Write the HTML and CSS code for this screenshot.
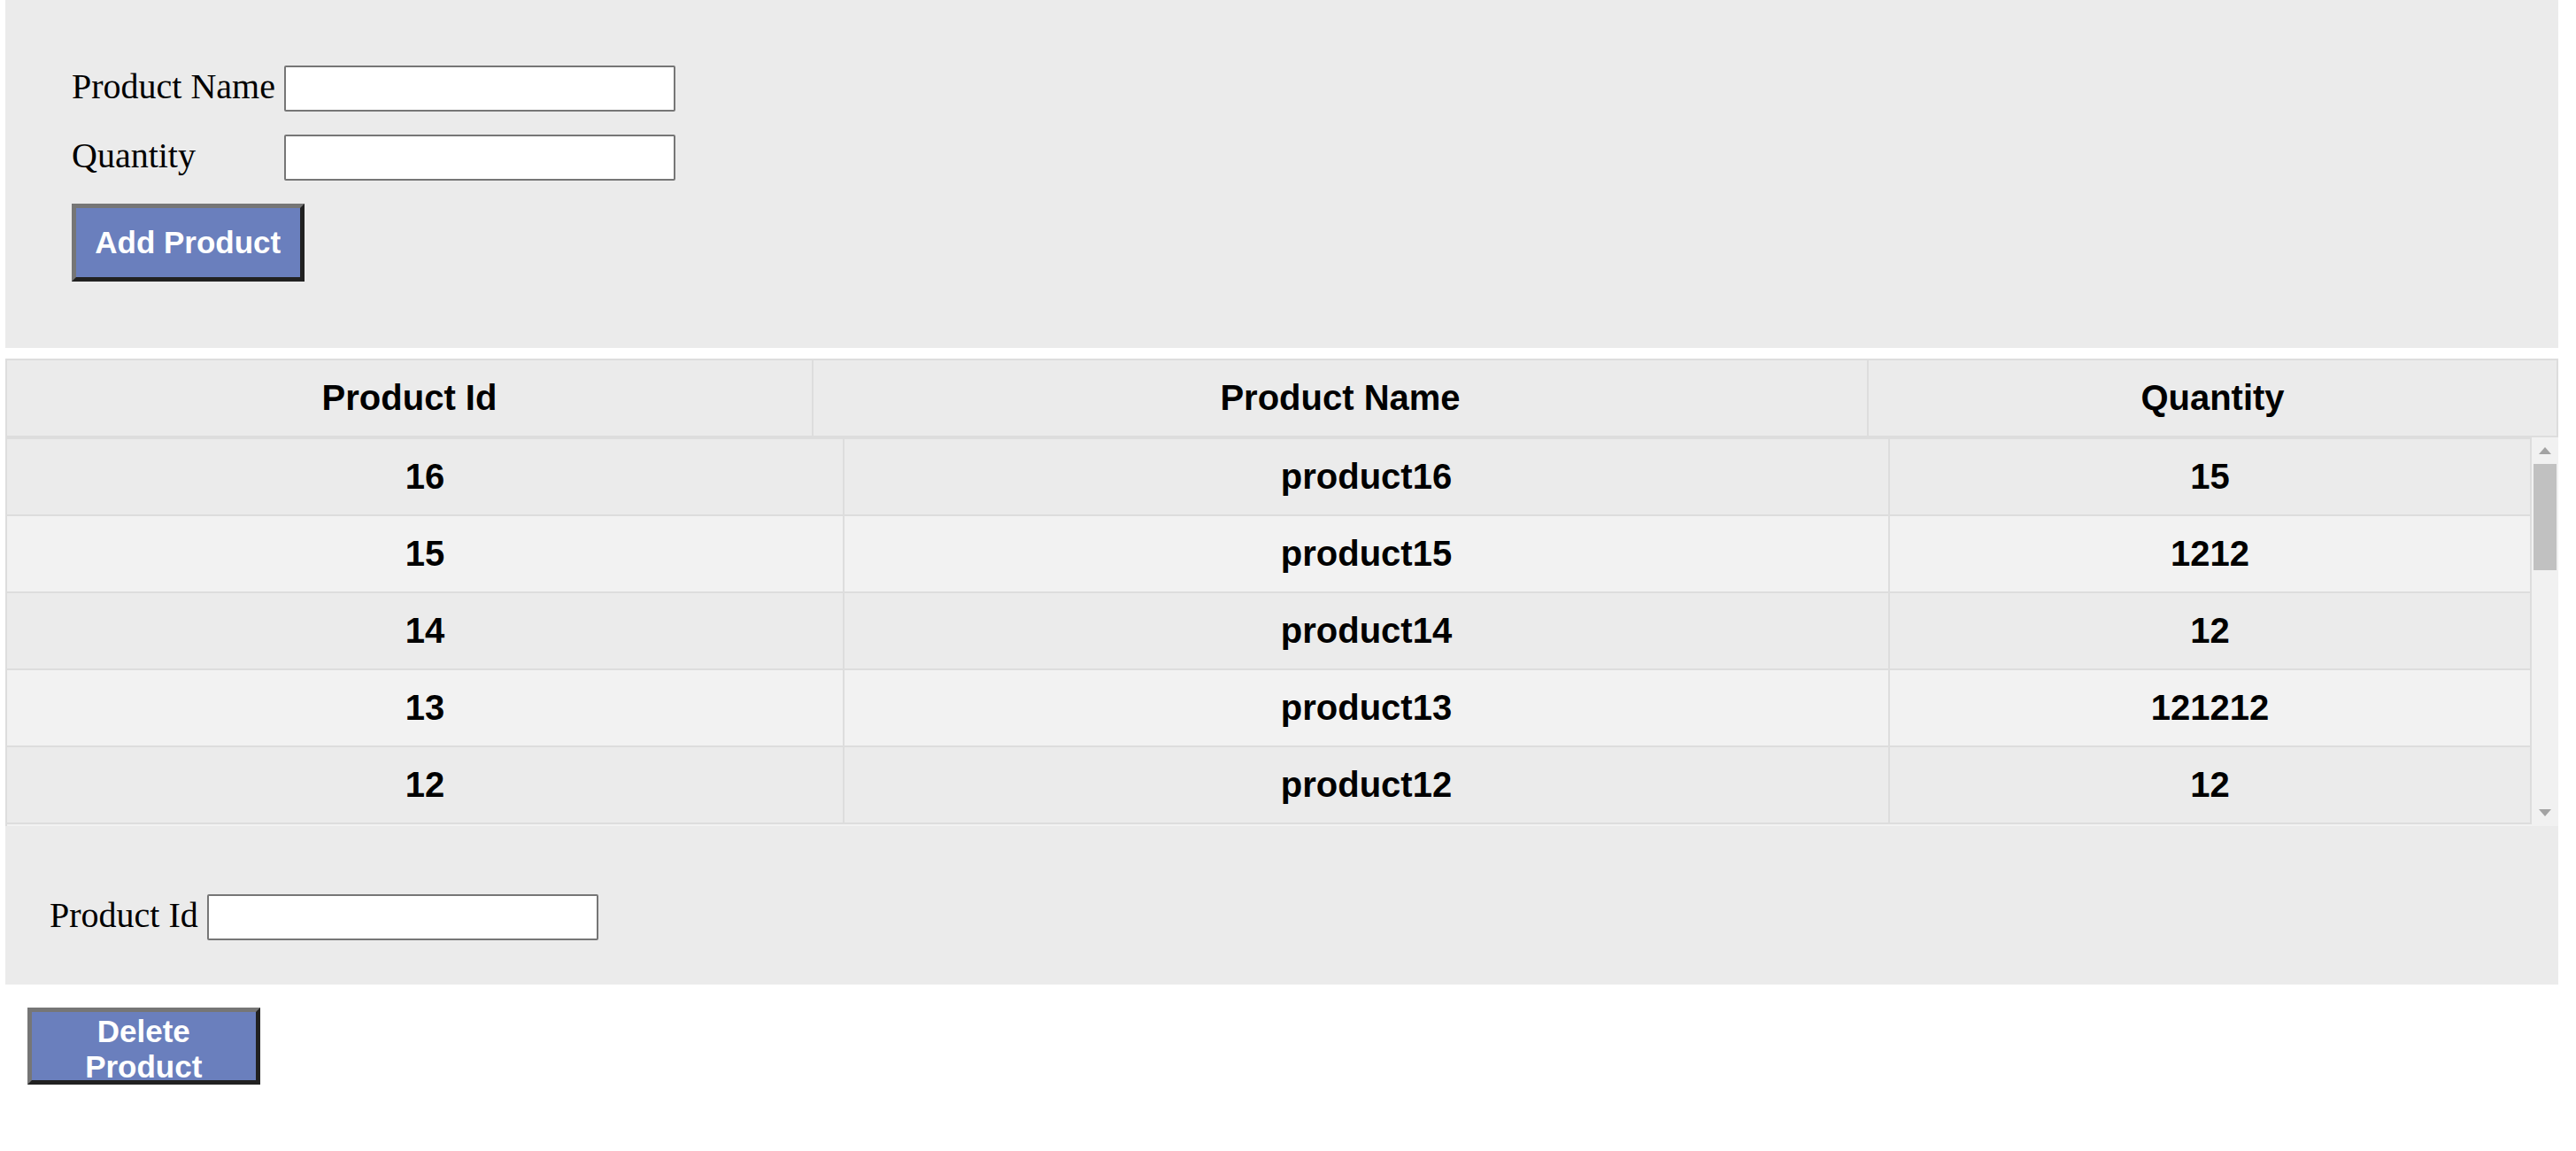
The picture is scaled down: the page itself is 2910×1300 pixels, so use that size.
FILE: index.html
```html
<!DOCTYPE html>
<html lang="en">
<head>
<meta charset="utf-8">
<title>Products</title>
<link rel="stylesheet" href="styles.css">
</head>
<body>
<div class="page">
  <section class="panel add-panel">
    <form class="form-grid">
      <label class="field-label" for="pname">Product Name</label>
      <input class="field-input" id="pname" type="text">
      <label class="field-label" for="pqty">Quantity</label>
      <input class="field-input" id="pqty" type="text">
      <button class="btn btn-add" type="button">Add Product</button>
    </form>
  </section>

  <div class="grid-wrap">
    <table class="head-table">
      <thead>
        <tr>
          <th class="hc1">Product Id</th>
          <th class="hc2">Product Name</th>
          <th class="hc3">Quantity</th>
        </tr>
      </thead>
    </table>
    <div class="body-area">
      <div class="body-rows">
        <table class="body-table">
          <tbody>
            <tr><td class="bc1">16</td><td class="bc2">product16</td><td class="bc3">15</td></tr>
            <tr><td class="bc1">15</td><td class="bc2">product15</td><td class="bc3">1212</td></tr>
            <tr><td class="bc1">14</td><td class="bc2">product14</td><td class="bc3">12</td></tr>
            <tr><td class="bc1">13</td><td class="bc2">product13</td><td class="bc3">121212</td></tr>
            <tr><td class="bc1">12</td><td class="bc2">product12</td><td class="bc3">12</td></tr>
          </tbody>
        </table>
      </div>
      <div class="scrollbar" aria-hidden="true">
        <div class="sb-btn"><span class="sb-arrow sb-up"></span></div>
        <div class="sb-thumb"></div>
        <div class="sb-fill"></div>
        <div class="sb-btn"><span class="sb-arrow sb-down"></span></div>
      </div>
    </div>
  </div>

  <section class="panel delete-panel">
    <label class="field-label" for="pid">Product Id</label>
    <input class="field-input" id="pid" type="text">
  </section>

  <button class="btn btn-delete" type="button">Delete Product</button>
</div>
</body>
</html>
```

FILE: styles.css
```css
html, body {
  margin: 0;
  padding: 0;
  background: #ffffff;
}

.page {
  margin: 0 20px 0 6px;
  font-family: "Liberation Serif", "Times New Roman", serif;
  color: #000;
}

.panel {
  background: #ebebeb;
}

.add-panel {
  padding: 74px 75px 75px;
}

.form-grid {
  margin: 0;
  display: grid;
  grid-template-columns: max-content max-content;
  justify-content: start;
  align-items: baseline;
  column-gap: 10px;
  row-gap: 26px;
}

.field-label {
  font-family: "Liberation Serif", "Times New Roman", serif;
  font-size: 40px;
  line-height: normal;
  color: #000;
}

.field-input {
  box-sizing: border-box;
  width: 442px;
  height: 52px;
  margin: 0;
  padding: 2px 5px;
  border: 2px solid #767676;
  border-radius: 2px;
  background: #fff;
  font-family: "Liberation Sans", Arial, sans-serif;
  font-size: 33px;
}

.btn {
  box-sizing: border-box;
  width: 262.5px;
  height: 87.5px;
  margin: 0;
  padding: 2px 15px;
  background: #6a7fbd;
  color: #fff;
  font-family: "Liberation Sans", Arial, sans-serif;
  font-weight: bold;
  font-size: 35px;
  line-height: normal;
  border-style: solid;
  border-width: 5px;
  border-color: #767676 #212121 #212121 #767676;
  border-radius: 0;
  text-align: center;
}

.btn-add {
  grid-column: 1 / -1;
  justify-self: start;
}

/* table */
.grid-wrap {
  margin-top: 12px;
  font-family: "Liberation Sans", Arial, sans-serif;
}

.head-table,
.body-table {
  width: 100%;
  table-layout: fixed;
  border-collapse: separate;
  border-spacing: 0;
  border-left: 2px solid #dddddd;
  border-top: 2px solid #dddddd;
}

.head-table th,
.body-table td {
  box-sizing: border-box;
  padding: 0;
  border-right: 2px solid #dddddd;
  border-bottom: 2px solid #dddddd;
  text-align: center;
  font-weight: bold;
  font-size: 40px;
  color: #000;
  height: 87px;
}

.head-table th {
  background: #ebebeb;
}

.hc1 { width: 911px; }
.hc2 { width: 1192px; }

.bc1 { width: 946px; }
.bc2 { width: 1181px; }

.body-table tr:nth-child(odd) td { background: #ebebeb; }
.body-table tr:nth-child(even) td { background: #f2f2f2; }

.body-area {
  display: flex;
  height: 439px;
}

.body-rows {
  flex: 1;
  min-width: 0;
  background: #f2f2f2;
  box-shadow: inset 2px 0 0 #dddddd;
}

.scrollbar {
  width: 30px;
  flex: none;
  display: flex;
  flex-direction: column;
  background: #f1f1f1;
}

.sb-btn {
  height: 30px;
  flex: none;
  display: flex;
  align-items: center;
  justify-content: center;
}

.sb-arrow {
  width: 0;
  height: 0;
  border-left: 7px solid transparent;
  border-right: 7px solid transparent;
}

.sb-up {
  border-bottom: 8px solid #a3a3a3;
}

.sb-down {
  border-top: 8px solid #a3a3a3;
}

.sb-thumb {
  height: 120px;
  margin: 0 2px;
  background: #c1c1c1;
  flex: none;
}

.sb-fill {
  flex: 1;
}

/* delete */
.delete-panel {
  display: flex;
  align-items: baseline;
  gap: 10px;
  padding: 77px 50px 50px;
}

.btn-delete {
  display: block;
  margin: 26px 0 0 25px;
}
```
